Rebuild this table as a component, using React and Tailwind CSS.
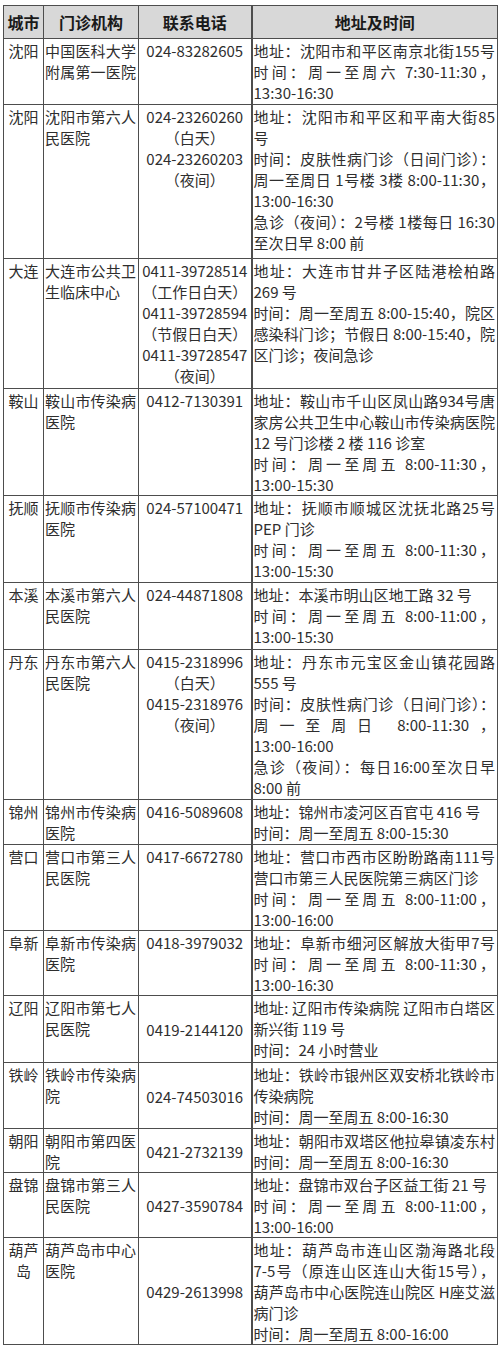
import React from 'react';

// J = justified line (spread to the cell width), plain string = ragged line
const J = (t) => ({ t, j: true });

const rows = [
  {
    h: 'h-[66px]',
    city: ['沈阳'],
    name: [J('中国医科大学'), J('附属第一医院')],
    phone: ['024-83282605'],
    addr: [J('地址：沈阳市和平区南京北街155号'), J('时间：周一至周六 7:30-11:30，'), '13:30-16:30'],
  },
  {
    h: 'h-[154px]',
    city: ['沈阳'],
    name: [J('沈阳市第六人'), '民医院'],
    phone: ['024-23260260', '（白天）', '024-23260203', '（夜间）'],
    addr: [
      J('地址：沈阳市和平区和平南大街85'),
      '号',
      J('时间：皮肤性病门诊（日间门诊）：'),
      J('周一至周日 1号楼 3楼 8:00-11:30，'),
      '13:00-16:30',
      J('急诊（夜间）：2号楼 1楼每日 16:30'),
      '至次日早 8:00 前',
    ],
  },
  {
    h: 'h-[130px]',
    city: ['大连'],
    name: [J('大连市公共卫'), '生临床中心'],
    phone: ['0411-39728514', '（工作日白天）', '0411-39728594', '（节假日白天）', '0411-39728547', '（夜间）'],
    addr: [
      J('地址：大连市甘井子区陆港桧柏路'),
      '269 号',
      J('时间：周一至周五 8:00-15:40，院区'),
      J('感染科门诊；节假日 8:00-15:40，院'),
      '区门诊；夜间急诊',
    ],
  },
  {
    h: 'h-[104px]',
    city: ['鞍山'],
    name: [J('鞍山市传染病'), '医院'],
    phone: ['0412-7130391'],
    addr: [
      J('地址：鞍山市千山区凤山路934号唐'),
      J('家房公共卫生中心鞍山市传染病医院'),
      '12 号门诊楼 2 楼 116 诊室',
      J('时间：周一至周五 8:00-11:30，'),
      '13:00-15:30',
    ],
  },
  {
    h: 'h-[87px]',
    city: ['抚顺'],
    name: [J('抚顺市传染病'), '医院'],
    phone: ['024-57100471'],
    addr: [J('地址：抚顺市顺城区沈抚北路25号'), 'PEP 门诊', J('时间：周一至周五 8:00-11:30，'), '13:00-15:30'],
  },
  {
    h: 'h-[67px]',
    city: ['本溪'],
    name: [J('本溪市第六人'), '民医院'],
    phone: ['024-44871808'],
    addr: ['地址：本溪市明山区地工路 32 号', J('时间：周一至周五 8:00-11:00，'), '13:00-15:30'],
  },
  {
    h: 'h-[150px]',
    city: ['丹东'],
    name: [J('丹东市第六人'), '民医院'],
    phone: ['0415-2318996', '（白天）', '0415-2318976', '（夜间）'],
    addr: [
      J('地址：丹东市元宝区金山镇花园路'),
      '555 号',
      J('时间：皮肤性病门诊（日间门诊）：'),
      J('周一至周日 8:00-11:30，'),
      '13:00-16:00',
      J('急诊（夜间）：每日16:00至次日早'),
      '8:00 前',
    ],
  },
  {
    h: 'h-[45px]',
    city: ['锦州'],
    name: [J('锦州市传染病'), '医院'],
    phone: ['0416-5089608'],
    addr: ['地址：锦州市凌河区百官屯 416 号', '时间：周一至周五 8:00-15:30'],
  },
  {
    h: 'h-[85px]',
    city: ['营口'],
    name: [J('营口市第三人'), '民医院'],
    phone: ['0417-6672780'],
    addr: [
      J('地址：营口市西市区盼盼路南111号'),
      '营口市第三人民医院第三病区门诊',
      J('时间：周一至周五 8:00-11:00，'),
      '13:00-16:00',
    ],
  },
  {
    h: 'h-[65px]',
    city: ['阜新'],
    name: [J('阜新市传染病'), '医院'],
    phone: ['0418-3979032'],
    addr: [J('地址：阜新市细河区解放大街甲7号'), J('时间：周一至周五 8:00-11:30，'), '13:00-16:30'],
  },
  {
    h: 'h-[67px]',
    mid: true,
    city: ['辽阳'],
    name: [J('辽阳市第七人'), '民医院'],
    phone: ['0419-2144120'],
    addr: [J('地址: 辽阳市传染病院 辽阳市白塔区'), '新兴街 119 号', '时间：24 小时营业'],
  },
  {
    h: 'h-[66px]',
    mid: true,
    city: ['铁岭'],
    name: [J('铁岭市传染病'), '院'],
    phone: ['024-74503016'],
    addr: [J('地址：铁岭市银州区双安桥北铁岭市'), '传染病院', '时间：周一至周五 8:00-16:30'],
  },
  {
    h: 'h-[43px]',
    mid: true,
    city: ['朝阳'],
    name: [J('朝阳市第四医'), '院'],
    phone: ['0421-2732139'],
    addr: [J('地址：朝阳市双塔区他拉皋镇凌东村'), '时间：周一至周五 8:00-16:30'],
  },
  {
    h: 'h-[65px]',
    mid: true,
    city: ['盘锦'],
    name: [J('盘锦市第三人'), '民医院'],
    phone: ['0427-3590784'],
    addr: ['地址：盘锦市双台子区益工街 21 号', J('时间：周一至周五 8:00-11:00，'), '13:00-16:00'],
  },
  {
    h: 'h-[107px]',
    mid: true,
    city: ['葫芦', '岛'],
    name: [J('葫芦岛市中心'), '医院'],
    phone: ['0429-2613998'],
    addr: [
      J('地址：葫芦岛市连山区渤海路北段'),
      J('7-5号（原连山区连山大街15号），'),
      J('葫芦岛市中心医院连山院区 H座艾滋'),
      '病门诊',
      '时间：周一至周五 8:00-16:00',
    ],
  },
];

function Lines({ items }) {
  return items.map((l, i) =>
    typeof l === 'string' ? (
      <div key={i} className="whitespace-nowrap">{l}</div>
    ) : (
      <div key={i} className="whitespace-nowrap text-justify [text-align-last:justify]">{l.t}</div>
    )
  );
}

export default function App() {
  return (
    <div className="w-[500px] min-h-[1347px] bg-white pt-[5px] pl-[3px] text-[#2e2e2e] font-['Noto_Sans_CJK_SC','Noto_Sans',sans-serif]">
      <table className="table-fixed border-collapse w-[494px] text-[15px] leading-[21px]">
        <thead>
          <tr className="h-[33px] bg-[#d8d8d8] text-[#1a1a1a] text-[16px]">
            <th className="w-[40px] border border-[#4d4d4d] font-semibold">城市</th>
            <th className="w-[95px] border border-[#4d4d4d] font-semibold">门诊机构</th>
            <th className="w-[113px] border border-[#4d4d4d] font-semibold">联系电话</th>
            <th className="w-[246px] border border-[#4d4d4d] border-l-2 font-semibold">地址及时间</th>
          </tr>
        </thead>
        <tbody>
          {rows.map((r, i) => (
            <tr key={i} className={r.h}>
              <td className="border border-[#4d4d4d] align-top text-center px-0 pt-px overflow-hidden">
                <Lines items={r.city} />
              </td>
              <td className="border border-[#4d4d4d] align-top pl-px pr-0.5 pt-px overflow-hidden">
                <Lines items={r.name} />
              </td>
              <td className={`border border-[#4d4d4d] text-center pt-px overflow-hidden ${r.mid ? 'align-middle' : 'align-top'}`}>
                <Lines items={r.phone} />
              </td>
              <td className="border border-[#4d4d4d] border-l-2 align-top pl-px pr-0.5 pt-px overflow-hidden">
                <Lines items={r.addr} />
              </td>
            </tr>
          ))}
        </tbody>
      </table>
    </div>
  );
}
